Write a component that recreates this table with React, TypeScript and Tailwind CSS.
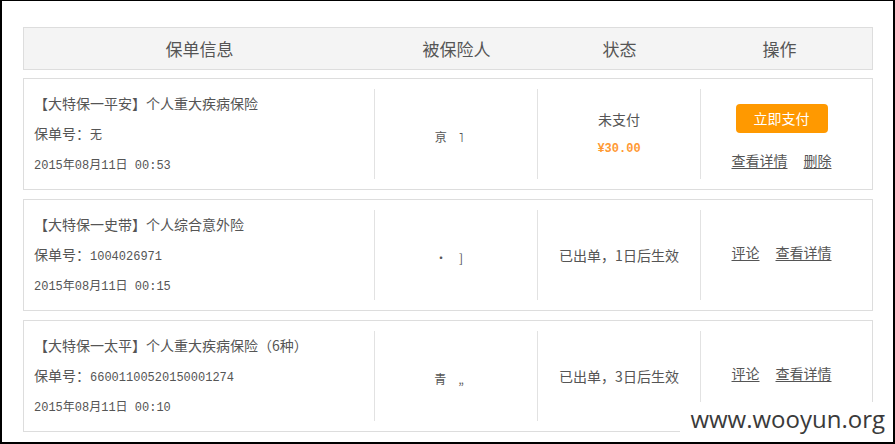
type Order = {
  title: string;
  policyNo: string;
  date: string;
  unpaid?: boolean;
  price?: string;
  status?: string;
  frag: [string, string];
};

const orders: Order[] = [
  {
    title: "【大特保一平安】个人重大疾病保险",
    policyNo: "无",
    date: "00:53",
    unpaid: true,
    price: "¥30.00",
    frag: ["亰", "˥"],
  },
  {
    title: "【大特保一史带】个人综合意外险",
    policyNo: "1004026971",
    date: "00:15",
    status: "已出单，1日后生效",
    frag: ["·", "]"],
  },
  {
    title: "【大特保一太平】个人重大疾病保险（6种）",
    policyNo: "66001100520150001274",
    date: "00:10",
    status: "已出单，3日后生效",
    frag: ["青", "„"],
  },
];

const mono = "font-['Liberation_Mono','Noto_Sans_CJK_SC',monospace]";

function Row({ o }: { o: Order }) {
  return (
    <div className="flex h-[112px] border border-[#dddddd] py-[10px]">
      {/* 保单信息 */}
      <div className="flex w-[351px] flex-col justify-center border-r border-[#e2e2e2] pl-[10px] leading-[30px]">
        <p className="text-[14px]">{o.title}</p>
        <p className="text-[14px]">
          保单号：
          <span className={`${mono} text-[12px]`}>{o.policyNo}</span>
        </p>
        <p className={`${mono} text-[12px]`}>2015年08月11日 {o.date}</p>
      </div>

      {/* 被保险人 (redacted in the screenshot) */}
      <div className="flex w-[163px] items-center justify-center gap-[12px] border-r border-[#e2e2e2] pr-[14px] pt-[6px] text-[12px] leading-[14px]">
        <span>{o.frag[0]}</span>
        <span>{o.frag[1]}</span>
      </div>

      {/* 状态 */}
      <div className="flex w-[163px] flex-col items-center justify-center border-r border-[#e2e2e2] leading-[30px]">
        {o.unpaid ? (
          <>
            <p className="text-[14px]">未支付</p>
            <p className={`${mono} text-[12px] font-bold text-[#ff9933]`}>{o.price}</p>
          </>
        ) : (
          <p className="text-[14px]">{o.status}</p>
        )}
      </div>

      {/* 操作 */}
      {o.unpaid ? (
        <div className="flex flex-1 flex-col items-center pr-[10px] pt-[15px]">
          <button className="h-[29px] w-[92px] rounded-[4px] bg-[#ff9900] text-[14px] text-white">
            立即支付
          </button>
          <div className="mt-[17px] flex gap-[16px] text-[14px] leading-[20px]">
            <a className="underline underline-offset-2">查看详情</a>
            <a className="underline underline-offset-2">删除</a>
          </div>
        </div>
      ) : (
        <div className="flex flex-1 items-center justify-center gap-[16px] pb-[6px] pr-[10px] text-[14px]">
          <a className="underline underline-offset-2">评论</a>
          <a className="underline underline-offset-2">查看详情</a>
        </div>
      )}
    </div>
  );
}

export default function App() {
  return (
    <div className="relative h-[444px] w-[895px] overflow-hidden border-b-2 border-l-2 border-r-2 border-t border-black bg-white font-['Noto_Sans_CJK_SC',sans-serif] text-[#555555]">
      <div className="pl-[21px] pr-[20px] pt-[26px]">
        {/* header */}
        <div className="flex h-[43px] items-center border border-[#dddddd] bg-[#f4f4f4] text-[17px] text-[#555555]">
          <div className="w-[351px] text-center">保单信息</div>
          <div className="w-[163px] text-center">被保险人</div>
          <div className="w-[163px] text-center">状态</div>
          <div className="flex-1 pr-[14px] text-center">操作</div>
        </div>

        <div className="mt-[8px] flex flex-col gap-[9px]">
          {orders.map((o, i) => (
            <Row key={i} o={o} />
          ))}
        </div>
      </div>

      {/* watermark */}
      <div className="absolute bottom-0 right-0 bg-white pb-[10px] pl-[10px] pr-[8px] pt-[4px] font-['Open_Sans',sans-serif] text-[24px] leading-[26px] text-[#3a3a3a]">
        www.wooyun.org
      </div>
    </div>
  );
}
